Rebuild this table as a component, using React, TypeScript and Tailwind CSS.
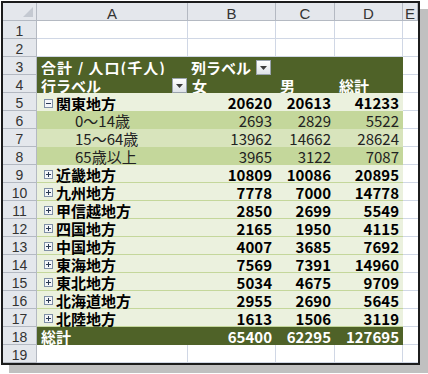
import React from 'react';

const grid = 'border-[#d0d7e5]';

const regions: [string, number, number, number][] = [
  ['近畿地方', 10809, 10086, 20895],
  ['九州地方', 7778, 7000, 14778],
  ['甲信越地方', 2850, 2699, 5549],
  ['四国地方', 2165, 1950, 4115],
  ['中国地方', 4007, 3685, 7692],
  ['東海地方', 7569, 7391, 14960],
  ['東北地方', 5034, 4675, 9709],
  ['北海道地方', 2955, 2690, 5645],
  ['北陸地方', 1613, 1506, 3119],
];

const kanto: [string, number, number, number, string][] = [
  ['0～14歳', 2693, 2829, 5522, 'bg-[#c4d79b]'],
  ['15～64歳', 13962, 14662, 28624, 'bg-[#d8e4bc]'],
  ['65歳以上', 3965, 3122, 7087, 'bg-[#c4d79b]'],
];

const RowHead = ({ n }: { n: number }) => (
  <div className="w-[34px] shrink-0 pt-[4px] text-center leading-[13px] bg-[#e4e7ec] border-r border-b border-[#b4b9c2] text-[14px] text-[#333] font-['Liberation_Sans']">
    {n}
  </div>
);

const ECell = () => <div className={`w-[15px] shrink-0 border-b ${grid}`} />;

const DropBtn = () => (
  <span className="w-[15px] h-[15px] flex items-center justify-center bg-gradient-to-b from-white to-[#dfe3e8] border border-[#9aa3ad]">
    <svg width="7" height="4" viewBox="0 0 7 4">
      <path d="M0 0h7L3.5 4z" fill="#3c3c3c" />
    </svg>
  </span>
);

const Toggle = ({ open }: { open: boolean }) => (
  <svg width="9" height="9" viewBox="0 0 9 9" className="shrink-0">
    <rect x="0.5" y="0.5" width="8" height="8" fill="#f4f6f9" stroke="#7f8fa6" />
    <path d="M2 4.5h5" stroke="#2a3a55" />
    {!open && <path d="M4.5 2v5" stroke="#2a3a55" />}
  </svg>
);

const Num = ({ w, v, bold = true }: { w: string; v: number; bold?: boolean }) => (
  <div className={`${w} shrink-0 text-right pr-[4px] ${bold ? 'font-bold' : ''}`}>{v}</div>
);

export default function App() {
  return (
    <div className="w-[428px] h-[374px] bg-white pt-px pl-px font-['Noto_Sans_CJK_JP',sans-serif]">
      <div className="w-[419px] h-[364px] border-2 border-[#1c1c1c] bg-white shadow-[8px_8px_0_#c0c0c0] flex flex-col">
        {/* column letters */}
        <div className="flex h-[18px] bg-[#e4e7ec] text-[15px] text-[#333] font-['Liberation_Sans'] leading-[13px]">
          <div className="w-[34px] shrink-0 border-r border-b border-[#b4b9c2] relative">
            <svg width="10" height="10" viewBox="0 0 10 10" className="absolute right-[3px] bottom-[3px]">
              <path d="M10 0v10H0z" fill="#c4c9d1" />
            </svg>
          </div>
          {[
            ['A', 'w-[151px]'],
            ['B', 'w-[88px]'],
            ['C', 'w-[59px]'],
            ['D', 'w-[68px]'],
            ['E', 'w-[15px]'],
          ].map(([l, w]) => (
            <div key={l} className={`${w} shrink-0 pt-[4px] text-center border-r border-b border-[#b4b9c2]`}>
              {l}
            </div>
          ))}
        </div>

        {[1, 2].map((n) => (
          <div key={n} className="flex h-[18px]">
            <RowHead n={n} />
            {['w-[151px]', 'w-[88px]', 'w-[59px]', 'w-[68px]'].map((w) => (
              <div key={w} className={`${w} shrink-0 border-r border-b ${grid}`} />
            ))}
            <ECell />
          </div>
        ))}

        {/* pivot header */}
        <div className="flex h-[18px] leading-[15px] text-[15px]">
          <RowHead n={3} />
          <div className="w-[366px] flex bg-[#4f6228] text-white font-bold pt-[3px]">
            <div className="w-[151px] pl-[4px] tracking-[1px]">合計 / 人口(千人)</div>
            <div className="w-[88px] pl-[3px] flex items-start gap-[5px]">
              列ラベル
              <DropBtn />
            </div>
          </div>
          <ECell />
        </div>
        <div className="flex h-[18px] leading-[15px] text-[15px]">
          <RowHead n={4} />
          <div className="w-[366px] flex bg-[#4f6228] text-white font-bold pt-[3px]">
            <div className="w-[151px] pl-[4px] pr-[1px] flex items-start justify-between">
              行ラベル
              <DropBtn />
            </div>
            <div className="w-[88px] pl-[4px]">女</div>
            <div className="w-[59px] pl-[4px]">男</div>
            <div className="w-[68px] pl-[4px]">総計</div>
          </div>
          <ECell />
        </div>

        {/* 関東 */}
        <div className="flex h-[18px] leading-[15px] text-[15px] text-black">
          <RowHead n={5} />
          <div className="w-[366px] flex bg-[#ebf1de] pt-[2px]">
            <div className="w-[151px] pl-[7px] flex items-center gap-[3px] font-bold">
              <Toggle open />
              関東地方
            </div>
            <Num w="w-[88px]" v={20620} />
            <Num w="w-[59px]" v={20613} />
            <Num w="w-[68px]" v={41233} />
          </div>
          <ECell />
        </div>
        {kanto.map(([label, f, m, t, bg], i) => (
          <div key={label} className="flex h-[18px] leading-[15px] text-[15px] text-[#222]">
            <RowHead n={6 + i} />
            <div className={`w-[366px] flex pt-[2px] ${bg}`}>
              <div className="w-[151px] pl-[38px]">{label}</div>
              <Num w="w-[88px]" v={f} bold={false} />
              <Num w="w-[59px]" v={m} bold={false} />
              <Num w="w-[68px]" v={t} bold={false} />
            </div>
            <ECell />
          </div>
        ))}

        {regions.map(([name, f, m, t], i) => (
          <div key={name} className="flex h-[18px] leading-[15px] text-[15px] text-black">
            <RowHead n={9 + i} />
            <div className="w-[366px] flex bg-[#ebf1de] pt-[2px] border-b border-[#c4d79b]">
              <div className="w-[151px] pl-[7px] flex items-center gap-[3px] font-bold">
                <Toggle open={false} />
                {name}
              </div>
              <Num w="w-[88px]" v={f} />
              <Num w="w-[59px]" v={m} />
              <Num w="w-[68px]" v={t} />
            </div>
            <ECell />
          </div>
        ))}

        {/* total */}
        <div className="flex h-[18px] leading-[15px] text-[15px]">
          <RowHead n={18} />
          <div className="w-[366px] flex bg-[#4f6228] text-white pt-[2px]">
            <div className="w-[151px] pl-[4px] font-bold">総計</div>
            <Num w="w-[88px]" v={65400} />
            <Num w="w-[59px]" v={62295} />
            <Num w="w-[68px]" v={127695} />
          </div>
          <ECell />
        </div>

        <div className="flex h-[18px]">
          <RowHead n={19} />
          {['w-[151px]', 'w-[88px]', 'w-[59px]', 'w-[68px]'].map((w) => (
            <div key={w} className={`${w} shrink-0 border-r border-b ${grid}`} />
          ))}
          <ECell />
        </div>
      </div>
    </div>
  );
}
